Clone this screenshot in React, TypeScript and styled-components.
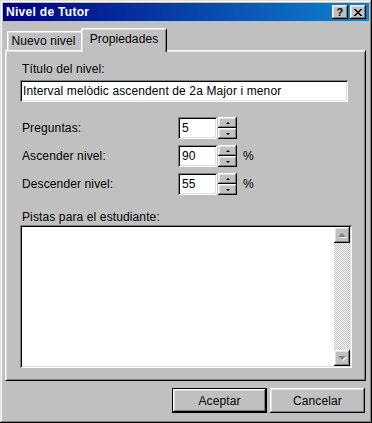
import React from 'react';
import styled, { createGlobalStyle } from 'styled-components';

const GlobalStyle = createGlobalStyle`
  html, body {
    margin: 0;
    padding: 0;
    background: #c0c0c0;
  }
  body {
    font-family: "Liberation Sans", Arial, sans-serif;
    font-size: 12px;
    letter-spacing: 0.12px;
    color: #000;
  }
`;

const raised = `
  box-shadow: inset -1px -1px #000, inset 1px 1px #fff, inset -2px -2px #808080, inset 2px 2px #dfdfdf;
`;

const sunken = `
  box-shadow: inset 1px 1px #808080, inset -1px -1px #fff, inset 2px 2px #000, inset -2px -2px #dfdfdf;
`;

const Window = styled.div`
  width: 372px;
  height: 423px;
  box-sizing: border-box;
  padding: 3px;
  background: #c0c0c0;
  box-shadow: inset -1px -1px #000, inset 1px 1px #dfdfdf, inset -2px -2px #808080, inset 2px 2px #fff;
  display: flex;
  flex-direction: column;
`;

const TitleBar = styled.div`
  height: 18px;
  display: flex;
  align-items: center;
  justify-content: space-between;
  padding: 0 3px 0 3px;
  background: linear-gradient(90deg, #000080, #1084d0);
`;

const Title = styled.span`
  color: #fff;
  font-weight: bold;
  font-size: 12px;
  letter-spacing: 0.3px;
`;

const CaptionButtons = styled.div`
  display: flex;
  gap: 2px;
`;

const CaptionButton = styled.div`
  width: 16px;
  height: 14px;
  box-sizing: border-box;
  background: #c0c0c0;
  ${raised}
  display: flex;
  align-items: center;
  justify-content: center;
  font-weight: bold;
  font-size: 11px;
  line-height: 14px;
`;

const Content = styled.div`
  flex: 1;
  display: flex;
  flex-direction: column;
  padding: 6px 3px 0 2px;
`;

const TabStrip = styled.div`
  display: flex;
  align-items: flex-end;
  height: 23px;
  padding-left: 2px;
`;

const Tab = styled.div<{ $active?: boolean; $w: number }>`
  position: relative;
  z-index: ${(p) => (p.$active ? 1 : 0)};
  box-sizing: border-box;
  width: ${(p) => p.$w}px;
  height: ${(p) => (p.$active ? 24 : 19)}px;
  margin: ${(p) => (p.$active ? '0 0 -2px -2px' : '0')};
  background: #c0c0c0;
  border-top: 1px solid #fff;
  border-left: 1px solid #fff;
  border-right: 1px solid #000;
  border-radius: 2px 2px 0 0;
  box-shadow: inset 1px 1px #dfdfdf, inset -1px 0 #808080;
  display: flex;
  justify-content: center;
  padding: ${(p) => (p.$active ? '3px 0 0 0' : '2px 3px 0 0')};
  line-height: 14px;
  white-space: nowrap;
`;

const Panel = styled.div`
  box-sizing: border-box;
  height: 331px;
  padding: 11px 13px 0 14px;
  border-top: 1px solid #fff;
  border-left: 1px solid #fff;
  border-right: 1px solid #000;
  border-bottom: 1px solid #000;
  box-shadow: inset 1px 1px #dfdfdf, inset -1px -1px #808080;
  display: flex;
  flex-direction: column;
`;

const Label = styled.div<{ $gap?: number }>`
  height: 14px;
  line-height: 14px;
  padding-left: 2px;
  margin-top: ${(p) => p.$gap ?? 0}px;
`;

const TextInput = styled.div`
  box-sizing: border-box;
  width: 328px;
  height: 22px;
  margin-top: 4px;
  padding: 0 3px;
  line-height: 22px;
  background: #fff;
  ${sunken}
  white-space: nowrap;
`;

const Rows = styled.div`
  margin-top: 15px;
  display: flex;
  flex-direction: column;
  gap: 6px;
`;

const Row = styled.div`
  display: flex;
  align-items: center;
  height: 22px;
`;

const RowLabel = styled.div`
  box-sizing: border-box;
  width: 158px;
  padding-left: 2px;
`;

const SpinBox = styled.div`
  box-sizing: border-box;
  width: 39px;
  height: 22px;
  padding-left: 4px;
  line-height: 22px;
  background: #fff;
  ${sunken}
`;

const Spinner = styled.div`
  display: flex;
  flex-direction: column;
  width: 19px;
  height: 22px;
  margin-left: 1px;
`;

const SpinButton = styled.div`
  box-sizing: border-box;
  height: 11px;
  background: #c0c0c0;
  ${raised}
  display: flex;
  align-items: center;
  justify-content: center;
`;

const Arrow = styled.span<{ $dir: 'up' | 'down'; $size: number; $color: string }>`
  width: 0;
  height: 0;
  border-left: ${(p) => p.$size}px solid transparent;
  border-right: ${(p) => p.$size}px solid transparent;
  ${(p) =>
    p.$dir === 'up'
      ? `border-bottom: ${p.$size}px solid ${p.$color};`
      : `border-top: ${p.$size}px solid ${p.$color};`}
`;

const Percent = styled.span`
  margin-left: 6px;
`;

const TextArea = styled.div`
  box-sizing: border-box;
  width: 332px;
  height: 143px;
  margin-top: 1px;
  padding: 2px;
  background: #fff;
  ${sunken}
  display: flex;
  justify-content: flex-end;
`;

const ScrollBar = styled.div`
  width: 16px;
  display: flex;
  flex-direction: column;
`;

const ScrollButton = styled.div`
  box-sizing: border-box;
  height: 16px;
  background: #c0c0c0;
  ${raised}
  display: flex;
  align-items: center;
  justify-content: center;
`;

const DisabledArrow = styled(Arrow)`
  filter: drop-shadow(1px 1px 0 #fff);
`;

const Track = styled.div`
  flex: 1;
  background-color: #fff;
  background-image: conic-gradient(#c0c0c0 25%, #fff 0 50%, #c0c0c0 0 75%, #fff 0);
  background-size: 2px 2px;
`;

const Footer = styled.div`
  display: flex;
  justify-content: flex-end;
  gap: 3px;
  padding: 7px 1px 0 0;
`;

const Button = styled.div<{ $default?: boolean }>`
  box-sizing: border-box;
  width: 95px;
  height: 25px;
  background: #c0c0c0;
  ${raised}
  border: ${(p) => (p.$default ? '1px solid #000' : 'none')};
  display: flex;
  align-items: center;
  justify-content: center;
`;

const closeRows = ['XX....XX', '.XX..XX.', '..XXXX..', '...XX...', '..XXXX..', '.XX..XX.', 'XX....XX'];

function CloseGlyph() {
  return (
    <svg width="8" height="7" viewBox="0 0 8 7" shapeRendering="crispEdges">
      {closeRows.map((row, y) =>
        row.split('').map((c, x) => (c === 'X' ? <rect key={`${x}-${y}`} x={x} y={y} width="1" height="1" fill="#000" /> : null))
      )}
    </svg>
  );
}

function Spin(props: { value: string; percent?: boolean }) {
  return (
    <>
      <SpinBox>{props.value}</SpinBox>
      <Spinner>
        <SpinButton>
          <Arrow $dir="up" $size={2} $color="#000" />
        </SpinButton>
        <SpinButton>
          <Arrow $dir="down" $size={2} $color="#000" />
        </SpinButton>
      </Spinner>
      {props.percent && <Percent>%</Percent>}
    </>
  );
}

const fields = [
  { label: 'Preguntas:', value: '5', percent: false },
  { label: 'Ascender nivel:', value: '90', percent: true },
  { label: 'Descender nivel:', value: '55', percent: true },
];

export default function App() {
  return (
    <>
      <GlobalStyle />
      <Window>
        <TitleBar>
          <Title>Nivel de Tutor</Title>
          <CaptionButtons>
            <CaptionButton>?</CaptionButton>
            <CaptionButton>
              <CloseGlyph />
            </CaptionButton>
          </CaptionButtons>
        </TitleBar>
        <Content>
          <TabStrip>
            <Tab $w={76}>Nuevo nivel</Tab>
            <Tab $active $w={86}>
              Propiedades
            </Tab>
          </TabStrip>
          <Panel>
            <Label>Título del nivel:</Label>
            <TextInput>Interval melòdic ascendent de 2a Major i menor</TextInput>
            <Rows>
              {fields.map((f) => (
                <Row key={f.label}>
                  <RowLabel>{f.label}</RowLabel>
                  <Spin value={f.value} percent={f.percent} />
                </Row>
              ))}
            </Rows>
            <Label $gap={15}>Pistas para el estudiante:</Label>
            <TextArea>
              <ScrollBar>
                <ScrollButton>
                  <DisabledArrow $dir="up" $size={4} $color="#808080" />
                </ScrollButton>
                <Track />
                <ScrollButton>
                  <DisabledArrow $dir="down" $size={4} $color="#808080" />
                </ScrollButton>
              </ScrollBar>
            </TextArea>
          </Panel>
          <Footer>
            <Button $default>Aceptar</Button>
            <Button>Cancelar</Button>
          </Footer>
        </Content>
      </Window>
    </>
  );
}
